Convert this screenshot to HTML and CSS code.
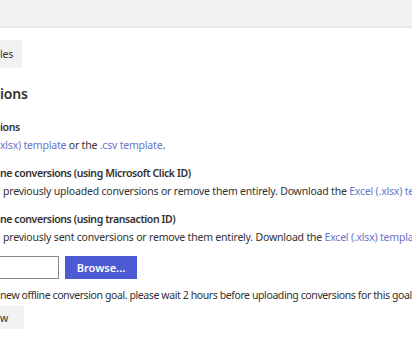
FILE: index.html
```html
<!DOCTYPE html>
<html lang="en">
<head>
    <meta charset="UTF-8">
    <meta name="viewport" content="width=device-width, initial-scale=1.0">
    <title>Offline conversions</title>
    <link rel="stylesheet" href="styles.css">
</head>
<body>
    <header class="top-bar"></header>
    <main class="content">
        <div class="toolbar">
            <button class="btn-default btn-templates">les</button>
        </div>

        <h2 class="page-title">ions</h2>

        <section class="block">
            <h3 class="block-title">ions</h3>
            <p class="block-text"><a href="#">xlsx) template</a> or the <a href="#">.csv template</a>.</p>
        </section>

        <section class="block">
            <h3 class="block-title">ne conversions (using Microsoft Click ID)</h3>
            <p class="block-text indent">previously uploaded conversions or remove them entirely. Download the <a href="#">Excel (.xlsx) temp</a></p>
        </section>

        <section class="block">
            <h3 class="block-title">ne conversions (using transaction ID)</h3>
            <p class="block-text indent">previously sent conversions or remove them entirely. Download the <a href="#">Excel (.xlsx) template</a> c</p>
        </section>

        <div class="file-row">
            <input type="text" class="file-input">
            <button class="btn-primary">Browse...</button>
        </div>

        <p class="note">new offline conversion goal. please wait 2 hours before uploading conversions for this goal</p>

        <div class="actions">
            <button class="btn-default btn-upload">w</button>
        </div>
    </main>
</body>
</html>
```

FILE: styles.css
```css
/* Base Styles */
:root {
    --primary-color: #4c5bd4;
    --link-color: #6b73c9;
    --text-color: #323130;
    --muted-bg: #f3f2f1;
    --border-color: #8a8886;
}

* {
    margin: 0;
    padding: 0;
    box-sizing: border-box;
    font-family: 'Noto Sans', 'Open Sans', sans-serif;
}

body {
    background-color: white;
    color: var(--text-color);
    font-size: 10.5px;
    letter-spacing: -0.2px;
    overflow: hidden;
}

a {
    color: var(--link-color);
    text-decoration: none;
}

/* Header */
.top-bar {
    height: 28px;
    background-color: var(--muted-bg);
    border-bottom: 2px solid #e9e8e6;
}

/* Main Content */
.content {
    white-space: nowrap;
}

.toolbar {
    padding-top: 12px;
}

.btn-default {
    background-color: var(--muted-bg);
    color: var(--text-color);
    border: none;
    font-size: 10.5px;
    letter-spacing: -0.2px;
    height: 28px;
    cursor: pointer;
}

.btn-templates {
    padding: 0 9px 0 0;
}

.page-title {
    font-size: 14px;
    font-weight: 600;
    margin-top: 15px;
    line-height: 22px;
}

.block {
    margin-top: 12px;
}

.block:first-of-type {
    margin-top: 14px;
}

.block-title {
    font-size: 10.5px;
    font-weight: 600;
    letter-spacing: -0.4px;
    line-height: 16px;
}

.block-text {
    line-height: 16px;
    margin-top: 2px;
}

.indent {
    padding-left: 3px;
}

/* File picker */
.file-row {
    display: flex;
    gap: 6px;
    margin-top: 11px;
}

.file-input {
    width: 61px;
    height: 23px;
    border: 1px solid var(--border-color);
    margin-left: -2px;
}

.btn-primary {
    background-color: var(--primary-color);
    color: white;
    border: none;
    width: 72px;
    height: 23px;
    font-size: 11px;
    font-weight: 600;
    cursor: pointer;
}

.note {
    margin-top: 8px;
    line-height: 16px;
    letter-spacing: -0.4px;
}

.actions {
    margin-top: 3px;
}

.btn-upload {
    height: 23px;
    padding: 0 16px 0 0;
}
```
